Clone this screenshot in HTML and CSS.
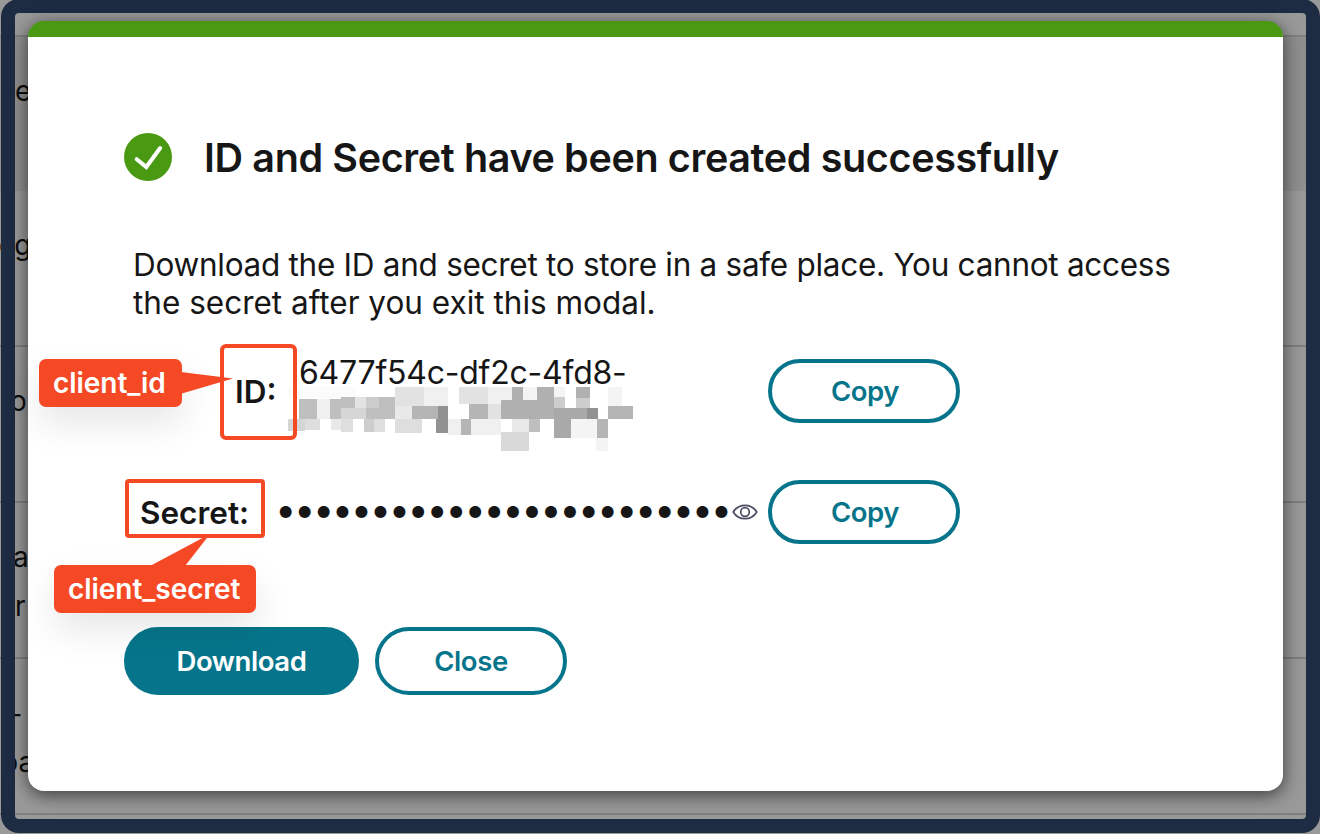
FILE: index.html
```html
<!DOCTYPE html>
<html lang="en">
<head>
<meta charset="utf-8">
<title>ID and Secret created</title>
<link rel="stylesheet" href="styles.css">
</head>
<body>
<div class="page">
  <div class="table">
    <div class="trow head"></div>
    <div class="trow shaded"><span class="cell c1">re</span></div>
    <div class="trow"><span class="cell c2">og</span></div>
    <div class="trow"><span class="cell c3">ro</span></div>
    <div class="trow"><span class="cell c4">a</span><span class="cell c5">r</span></div>
    <div class="trow"><span class="cell c6">r-</span><span class="cell c7">pa</span></div>
  </div>
  <div class="frame"></div>
  <main class="modal">
    <header class="title-row">
      <svg class="check" viewBox="0 0 48 48"><circle cx="24" cy="24" r="24" fill="#4a9913"/><path d="M12.700 26.200L22.300 34L36.200 15" fill="none" stroke="#fff" stroke-width="4" stroke-linecap="round" stroke-linejoin="miter"/></svg>
      <h1 class="title">ID and Secret have been created successfully</h1>
    </header>
    <p class="desc"><span class="l1">Download the ID and secret to store in a safe place. You cannot access</span><br><span class="l2">the secret after you exit this modal.</span></p>
    <div class="field id-row">
      <span class="label">ID:</span>
      <span class="value">6477f54c-df2c-4fd8-</span>
      <button class="btn copy">Copy</button>
    </div>
    <div class="field secret-row">
      <span class="label">Secret:</span>
      <span class="dots">••••••••••••••••••••••••</span>
      <svg class="eye" viewBox="0 0 26 18" fill="none" stroke="#4a4f63" stroke-width="1.700"><path d="M1.200 9C4 4.500 8 2.300 13 2.300S22 4.500 24.800 9C22 13.500 18 15.700 13 15.700S4 13.500 1.200 9Z" stroke-linejoin="round"/><circle cx="13" cy="9" r="4.300"/></svg>
      <button class="btn copy">Copy</button>
    </div>
    <div class="actions">
      <button class="btn download">Download</button>
      <button class="btn close">Close</button>
    </div>
  </main>
  <svg class="mosaic" viewBox="0 0 1110 360" shape-rendering="crispEdges">
    <path fill="#fbfbfb" d="M24 141h201v34H24z"/>
    <path fill="#e2e2e2" d="M345 141h87v57h-87zM537 141h87v51h-87zM225 171h33v33h-33zM624 192h39v45h-39z"/>
    <path fill="#f0f0f0" d="M432 141h72v57h-72zM624 141h72v51h-72zM111 177h39v60h-39zM504 237h39v48h-39zM573 237h90v48h-90z"/>
    <path fill="#bfbfbf" d="M57 177h54v60H57zM150 177h33v60h-33zM183 171h42v33h-42zM258 204h87v33h-87zM297 171h48v66h-48zM747 237h33v39h-33z"/>
    <path fill="#cdcdcd" d="M258 171h39v33h-39zM252 237h30v39h-30zM822 171h33v33h-33zM888 174h42v30h-42z"/>
    <path fill="#d6d6d6" d="M183 204h75v33h-75zM24 237h51v36H24z"/>
    <path fill="#e9e9e9" d="M345 198h51v39h-51zM153 237h30v33h-30zM696 237h51v39h-51z"/>
    <path fill="#dedede" d="M75 237h45v33H75zM183 237h36v39h-36zM282 237h33v39h-33zM345 237h81v42h-81z"/>
    <path fill="#d9d9d9" d="M663 276h84v57h-84z"/>
    <path fill="#b5b5b5" d="M396 198h78v39h-78zM567 192h57v45h-57zM543 237h30v48h-30zM984 198h75v39h-75zM951 237h33v57h-33z"/>
    <path fill="#b0b0b0" d="M696 141h33v39h-33zM663 180h108v57H663zM771 141h51v96h-51zM888 141h42v33h-42z"/>
    <path fill="#a9a9a9" d="M822 204h99v33h-99zM822 237h51v57h-51z"/>
    <path fill="#929292" d="M474 198h30v81h-36v-42h6zM921 204h33v33h-33z"/>
    <path fill="#f4f4f4" d="M729 141h42v39h-42zM822 141h33v30h-33zM984 141h42v57h-42zM873 237h78v57h-78zM948 294h36v39h-36z"/>
  </svg>
  <div class="callout call-id"><svg class="tail tail-id" viewBox="0 0 52 22"><path d="M0 0L52 6.500L0 21.700Z" fill="#f54925"/></svg><span>client_id</span></div>
  <div class="callout call-secret"><svg class="tail tail-secret" viewBox="0 0 60 32"><path d="M0 32L60 0L35 32Z" fill="#f54925"/></svg><span>client_secret</span></div>
  <div class="mark mark-id"></div>
  <div class="mark mark-secret"></div>
</div>
</body>
</html>
```
FILE: styles.css
```css
* { box-sizing: border-box; }
body { margin: 0; font-family: Inter, "Liberation Sans", sans-serif; color: #161616; }
.page { position: relative; width: 1320px; height: 834px; overflow: hidden; background: #999; }
.table { display: flex; flex-direction: column; font-size: 28px; line-height: 34px; color: #0e0e0e; }
.trow { position: relative; height: 156px; flex: none; border-bottom: 2px solid #7f7f7f; }
.head { height: 37px; }
.shaded { height: 154px; background: #8f8f8f; border-bottom: 0; }
.cell { position: absolute; white-space: nowrap; }
.c1 { left: 4px; top: 37px; letter-spacing: 1px; }
.c2 { left: -1px; top: 37px; letter-spacing: -1.5px; }
.c3 { left: 0; top: 37px; }
.c4 { left: 13px; top: 37px; }
.c5 { left: 15px; top: 86px; }
.c6 { left: 0; top: 38px; }
.c7 { left: 1px; top: 86px; }
.frame { position: absolute; left: 1px; top: -1px; width: 1319px; height: 834px; border: 14px solid #1d2b43; border-radius: 18px; }
.modal { position: absolute; left: 28px; top: 21px; width: 1255px; height: 770px; padding: 96px 0 0 96px; background: #fff; border-top: 16px solid #4a9913; border-radius: 16px; box-shadow: 0 4px 18px rgba(0,0,0,.62); }
.title-row { display: flex; align-items: center; gap: 32px; height: 48px; }
.check { width: 48px; height: 48px; }
.title { margin: 2px 0 0; font-size: 39.500px; line-height: 48px; font-weight: 600; white-space: nowrap; letter-spacing: -.36px; }
.desc { margin: 65px 0 0 9px; font-size: 31.500px; line-height: 38px; white-space: nowrap; }
.l1 { letter-spacing: -.28px; }
.l2 { letter-spacing: 0; }
.field { position: relative; display: flex; align-items: center; width: 836px; height: 64px; font-size: 32px; }
.id-row { margin-top: 37px; }
.secret-row { margin-top: 57px; }
.label { font-weight: 600; width: 151px; padding-top: 1px; font-size: 31.500px; }
.id-row .label { width: 175px; padding-left: 111px; white-space: nowrap; }
.secret-row .label { padding-left: 16px; }
.value { line-height: 38px; margin-bottom: 36px; letter-spacing: -.23px; }
.dots { width: 453px; height: 38px; line-height: 32px; font-size: 38px; letter-spacing: -2.430px; white-space: nowrap; }
.eye { width: 26px; height: 18px; margin-left: 4px; }
.btn { font-family: inherit; font-size: 27.500px; font-weight: 600; letter-spacing: -.4px; border: 4px solid #06758b; border-radius: 34px; background: #fff; color: #06758b; padding: 0 0 1px; }
.copy { width: 192px; height: 64px; margin-left: auto; padding-left: 2px; letter-spacing: -.5px; }
.actions { display: flex; gap: 16px; margin-top: 83px; }
.download { width: 235px; height: 68px; background: #06758b; color: #fff; }
.close { width: 192px; height: 68px; }
.mosaic { position: absolute; left: 280px; top: 340px; width: 370px; height: 120px; }
.mark { position: absolute; border: 4px solid #f54925; border-radius: 6px; }
.mark-id { left: 220px; top: 344px; width: 77px; height: 96px; }
.mark-secret { left: 125px; top: 479px; width: 140px; height: 59px; border-radius: 4px; }
.callout { position: absolute; height: 48px; line-height: 48px; padding-left: 14px; border-radius: 7px; background: #f54925; color: #fff; font-size: 28px; font-weight: 600; letter-spacing: -.05px; white-space: nowrap; box-shadow: 0 16px 36px rgba(0,0,0,.1); }
.call-id { left: 39px; top: 359px; width: 143px; }
.call-secret { left: 54px; top: 565px; width: 202px; }
.tail { position: absolute; }
.tail-id { left: 142px; top: 13px; width: 52px; height: 22px; }
.tail-secret { left: 96px; top: -31px; width: 60px; height: 32px; }
```
